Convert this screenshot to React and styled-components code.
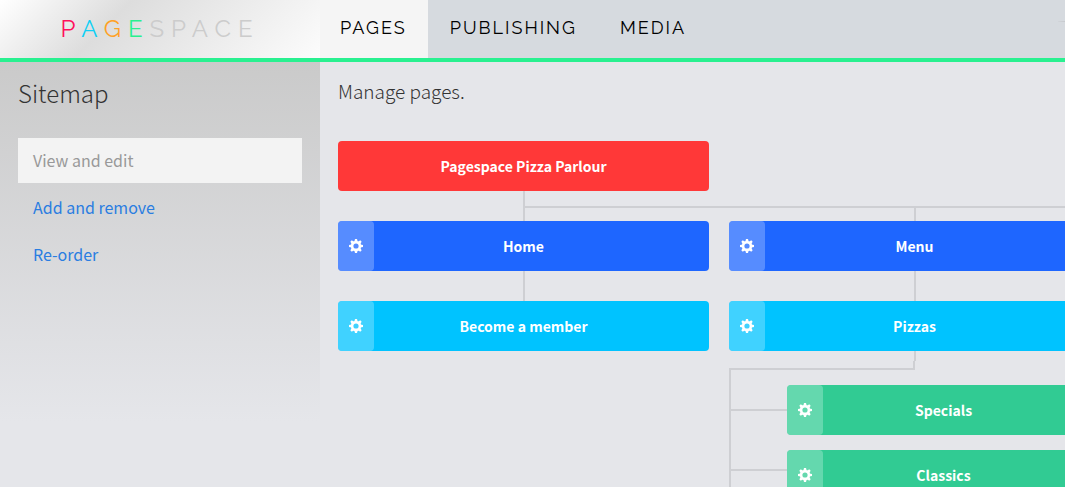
import React from "react";
import styled, { createGlobalStyle } from "styled-components";

const sans = `"Noto Sans CJK SC", "Noto Sans", sans-serif`;
const display = `Raleway, Lato, sans-serif`;
const line = "#cecfd3";

const GlobalStyle = createGlobalStyle`
  * { box-sizing: border-box; }
  body { margin: 0; background: #e5e6ea; font-family: ${sans}; color: #333; }
  ul { list-style: none; margin: 0; padding: 0; }
`;

const Page = styled.div`
  display: flex;
  flex-direction: column;
  height: 100vh;
`;

const Header = styled.header`
  display: flex;
  flex: none;
  height: 62px;
  background: #d6dadf;
  border-bottom: 4px solid #29f090;
`;

const Logo = styled.a`
  flex: none;
  display: flex;
  align-items: center;
  justify-content: center;
  width: 320px;
  background: linear-gradient(135deg, #fff 0%, #ddd 35%, #fcfcfc 100%);
  color: #ccc;
  font: 400 24px/24px ${display};
  letter-spacing: 7px;
  text-decoration: none;
`;

const Letter = styled.span`
  color: ${(p) => p.$color};
`;

const Nav = styled.nav`
  display: flex;
  gap: 2px;
  flex: 1;
`;

const NavLink = styled.a`
  display: flex;
  align-items: center;
  padding: 0 21px 2px 20px;
  background: ${(p) => (p.$active ? "#f5f5f5" : "transparent")};
  color: #000;
  font: 400 18px/24px ${display};
  letter-spacing: 2px;
  text-decoration: none;
`;

const Rule = styled.span`
  width: 7px;
  height: 1px;
  margin: 21px 0 0 auto;
  background: linear-gradient(90deg, #d2d5da, #c6c9cd);
`;

const Body = styled.div`
  display: flex;
  flex: 1;
  min-height: 0;
`;

const Sidebar = styled.aside`
  flex: none;
  width: 320px;
  padding: 13px 18px;
  background: linear-gradient(#cacaca, #e5e6ea 360px);
`;

const Title = styled.h1`
  margin: 0 0 27px;
  font-size: 24px;
  line-height: 36px;
  font-weight: 300;
`;

const Menu = styled.ul`
  display: flex;
  flex-direction: column;
  gap: 2px;
`;

const MenuLink = styled.a`
  display: block;
  padding: 0 15px;
  background: ${(p) => (p.$active ? "#f3f3f3" : "transparent")};
  color: ${(p) => (p.$active ? "#999" : "#2a7de1")};
  font-size: 16px;
  line-height: 45px;
  text-decoration: none;
`;

const Main = styled.main`
  flex: 1;
  min-width: 0;
  padding: 11px 18px;
  overflow: auto;
  scrollbar-width: none;
`;

const Intro = styled.p`
  margin: 0 0 32px;
  font-size: 19px;
  line-height: 36px;
  font-weight: 300;
`;

const Columns = styled.ul`
  display: flex;
  gap: 20px;
`;

const Column = styled.li`
  flex: none;
  width: 371px;
`;

const Node = styled.div`
  display: flex;
  height: 50px;
  max-width: 371px;
  border-radius: 4px;
  background: ${(p) => p.$color};
  overflow: hidden;
`;

const NodeLabel = styled.span`
  flex: 1;
  padding-right: ${(p) => (p.$offset ? "36px" : "0")};
  color: #fff;
  font-size: 14px;
  line-height: 50px;
  font-weight: 700;
  text-align: center;
`;

const GearButton = styled.button`
  flex: none;
  display: flex;
  align-items: center;
  justify-content: center;
  width: 36px;
  padding: 0;
  border: 0;
  border-radius: 4px;
  background: rgba(255, 255, 255, 0.25);
  color: #fff;
  cursor: pointer;
`;

const Stem = styled.div`
  width: 2px;
  height: ${(p) => p.$height}px;
  margin: 0 auto;
  background: ${(p) => (p.$hidden ? "transparent" : line)};
`;

const Bus = styled.div`
  height: 2px;
  margin: 0 -20px 0 ${(p) => (p.$first ? "calc(50% - 1px)" : "0")};
  background: ${line};
`;

const Elbow = styled.div`
  width: 50%;
  height: 9px;
  border: solid ${line};
  border-width: 0 2px 2px 0;
`;

const Branch = styled.div`
  display: flex;
`;

const Rail = styled.div`
  display: flex;
  flex-direction: column;
  gap: 58px;
  width: 58px;
  padding-top: 39px;
  border-left: 2px solid ${line};
`;

const Rung = styled.div`
  height: 2px;
  background: ${line};
`;

const Leaves = styled.ul`
  flex: 1;
  display: flex;
  flex-direction: column;
  gap: 15px;
  padding-top: 15px;
`;

const teeth = [0, 45, 90, 135, 180, 225, 270, 315];

const GearIcon = () => (
  <svg width="14" height="14" viewBox="0 0 14 14" fill="currentColor" aria-hidden="true">
    <circle cx="7" cy="7" r="3.9" fill="none" stroke="currentColor" strokeWidth="2.6" />
    {teeth.map((angle) => (
      <path key={angle} d="M5.4 2.6L6 0H8L8.6 2.6Z" transform={`rotate(${angle} 7 7)`} />
    ))}
  </svg>
);

const PageNode = ({ name, color }) => (
  <Node $color={color}>
    <GearButton type="button" aria-label={`${name} settings`}>
      <GearIcon />
    </GearButton>
    <NodeLabel $offset>{name}</NodeLabel>
  </Node>
);

const sections = [
  { name: "Home", child: "Become a member", leaves: [] },
  { name: "Menu", child: "Pizzas", leaves: ["Specials", "Classics"] },
];

export default function App() {
  return (
    <Page>
      <GlobalStyle />
      <Header>
        <Logo href="#">
          <span>
            <Letter $color="#ff0f5b">P</Letter>
            <Letter $color="#0fd0f5">A</Letter>
            <Letter $color="#ffa126">G</Letter>
            <Letter $color="#29f090">E</Letter>
            SPACE
          </span>
        </Logo>
        <Nav>
          <NavLink href="#pages" $active>PAGES</NavLink>
          <NavLink href="#publishing">PUBLISHING</NavLink>
          <NavLink href="#media">MEDIA</NavLink>
          <Rule />
        </Nav>
      </Header>
      <Body>
        <Sidebar>
          <Title>Sitemap</Title>
          <Menu>
            <li><MenuLink href="#view" $active>View and edit</MenuLink></li>
            <li><MenuLink href="#add">Add and remove</MenuLink></li>
            <li><MenuLink href="#order">Re-order</MenuLink></li>
          </Menu>
        </Sidebar>
        <Main>
          <Intro>Manage pages.</Intro>
          <Node $color="#ff3838">
            <NodeLabel>Pagespace Pizza Parlour</NodeLabel>
          </Node>
          <Columns>
            {sections.map((s, i) => (
              <Column key={s.name}>
                <Stem $height={15} $hidden={i > 0} />
                <Bus $first={i === 0} />
                <Stem $height={13} />
                <PageNode name={s.name} color="#1e66ff" />
                <Stem $height={30} />
                <PageNode name={s.child} color="#00c3ff" />
                {s.leaves.length > 0 && (
                  <>
                    <Stem $height={10} />
                    <Elbow />
                    <Branch>
                      <Rail>
                        {s.leaves.map((leaf) => <Rung key={leaf} />)}
                      </Rail>
                      <Leaves>
                        {s.leaves.map((leaf) => (
                          <li key={leaf}><PageNode name={leaf} color="#31cb93" /></li>
                        ))}
                      </Leaves>
                    </Branch>
                  </>
                )}
              </Column>
            ))}
          </Columns>
        </Main>
      </Body>
    </Page>
  );
}
